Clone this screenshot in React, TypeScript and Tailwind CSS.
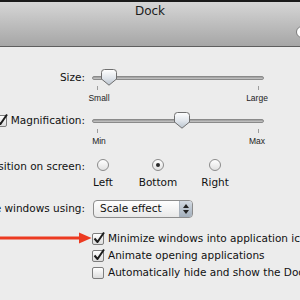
import React from "react";

const font = { fontFamily: '"DejaVu Sans", "Liberation Sans", Arial, sans-serif' };
const smallFont = { fontFamily: '"Liberation Sans", Arial, sans-serif' };

const Thumb = () => (
  <svg width="16" height="17" viewBox="0 0 16 17" className="block">
    <defs>
      <linearGradient id="thumbFill" x1="0" y1="0" x2="0" y2="1">
        <stop offset="0" stopColor="#ffffff" />
        <stop offset="0.55" stopColor="#dfe4ea" />
        <stop offset="1" stopColor="#b9c3ce" />
      </linearGradient>
    </defs>
    <path
      d="M3.5 0.5 H12.5 Q15.5 0.5 15.5 3.5 V10 L8 16.2 L0.5 10 V3.5 Q0.5 0.5 3.5 0.5 Z"
      fill="url(#thumbFill)"
      stroke="#6f6f6f"
      strokeWidth="1"
    />
  </svg>
);

const Slider = ({ pos, left, right }: { pos: number; left: string; right: string }) => (
  <div className="flex w-[172px] flex-col">
    <div className="relative flex h-[17px] items-center">
      <div className="h-[4px] w-full rounded-full border border-[#8a8a8a] bg-gradient-to-b from-[#9a9a9a] to-[#c9c9c9]" />
      <div className="absolute top-0" style={{ left: pos }}>
        <Thumb />
      </div>
    </div>
    <div className="flex justify-between px-[5px]">
      <div className="h-[4px] w-[1px] bg-[#9c9c9c]" />
      <div className="h-[4px] w-[1px] bg-[#9c9c9c]" />
    </div>
    <div className="mt-[2px] flex justify-between text-[8.5px] leading-[12px] text-[#222]" style={smallFont}>
      <span className="flex w-[14px] justify-center whitespace-nowrap">{left}</span>
      <span className="flex w-[14px] justify-center whitespace-nowrap">{right}</span>
    </div>
  </div>
);

const Check = ({ on }: { on?: boolean }) => (
  <div className="relative h-[12px] w-[12px] shrink-0 rounded-[2px] border border-[#7d7d7d] bg-gradient-to-b from-white to-[#dcdcdc]">
    {on && (
      <svg width="14" height="14" viewBox="0 0 14 14" className="absolute left-[-1px] top-[-3px]">
        <path d="M2.5 7.5 L5.5 11 L12 1.5" fill="none" stroke="#1d1d1d" strokeWidth="2" strokeLinejoin="round" />
      </svg>
    )}
  </div>
);

const Radio = ({ on }: { on?: boolean }) => (
  <div className="flex h-[12px] w-[12px] items-center justify-center rounded-full border border-[#8b8b8b] bg-gradient-to-b from-white to-[#e1e1e1]">
    {on && <div className="h-[4px] w-[4px] rounded-full bg-[#2a2a2a]" />}
  </div>
);

const Label = ({ children }: { children: React.ReactNode }) => (
  <div className="flex w-[88px] shrink-0 items-start justify-end overflow-hidden whitespace-nowrap pr-[3px] text-[10.5px] text-[#111]">
    {children}
  </div>
);

export default function App() {
  return (
    <div className="h-[300px] w-[300px] overflow-hidden bg-[#ececec]" style={font}>
      {/* title + toolbar */}
      <div className="border-t-[2px] border-b border-t-[#1a1a1a] border-b-[#5e5e5e] bg-gradient-to-b from-[#d6d6d6] to-[#a6a6a6]">
        <div className="pt-[2px] text-center text-[12px] leading-[14px] text-[#1b1b1b]">Dock</div>
        <div className="flex h-[28px] items-center justify-end">
          <div className="mr-[-120px] h-[12px] w-[124px] shrink-0 rounded-full border border-[#7a7a7a] bg-white" />
        </div>
      </div>

      {/* Size */}
      <div className="mt-[22px] flex">
        <Label>
          <span className="leading-[17px]">Size:</span>
        </Label>
        <div className="ml-[4px]">
          <Slider pos={9} left="Small" right="Large" />
        </div>
      </div>

      {/* Magnification */}
      <div className="mt-[8px] flex">
        <Label>
          <div className="flex h-[17px] items-center gap-[4px]">
            <Check on />
            <span>Magnification:</span>
          </div>
        </Label>
        <div className="ml-[4px]">
          <Slider pos={82} left="Min" right="Max" />
        </div>
      </div>

      {/* Position */}
      <div className="mt-[12px] flex">
        <Label>
          <span className="leading-[14px]">Position on screen:</span>
        </Label>
        <div className="ml-[2px] flex gap-[20px] text-[10.5px] text-[#111]">
          {[
            ["Left", false, "w-[26px]"],
            ["Bottom", true, "w-[44px]"],
            ["Right", false, "w-[30px]"],
          ].map(([t, on, w]) => (
            <div key={t as string} className={`flex flex-col items-center ${w as string}`}>
              <Radio on={on as boolean} />
              <span className="mt-[4px] leading-[14px] whitespace-nowrap">{t as string}</span>
            </div>
          ))}
        </div>
      </div>

      {/* Minimize using */}
      <div className="mt-[11px] flex items-center">
        <Label>
          <span>Minimize windows using:</span>
        </Label>
        <div className="ml-[5px] flex h-[18px] w-[100px] items-center overflow-hidden rounded-[4px] border border-[#8c8c8c] bg-gradient-to-b from-white to-[#e8e8e8]">
          <span className="flex-1 pl-[6px] text-[10.5px] text-[#111]">Scale effect</span>
          <div className="flex h-full w-[13px] flex-col items-center justify-center gap-[2px] border-l border-[#a9b2bc] bg-gradient-to-b from-[#d3dae2] to-[#a3afbc]">
            <svg width="6" height="4" viewBox="0 0 6 4"><path d="M0 4 L3 0 L6 4 Z" fill="#222" /></svg>
            <svg width="6" height="4" viewBox="0 0 6 4"><path d="M0 0 L3 4 L6 0 Z" fill="#222" /></svg>
          </div>
        </div>
      </div>

      {/* checkboxes */}
      <div className="mt-[14px] flex">
        <div className="flex w-[92px] shrink-0 items-start">
          <svg width="92" height="12" viewBox="0 0 92 12">
            <path d="M0 6 H81" stroke="#ec3a21" strokeWidth="3" />
            <path d="M79 0.5 L91.5 6 L79 11.5 Z" fill="#ec3a21" />
          </svg>
        </div>
        <div className="flex flex-col gap-[4px] text-[10.5px] text-[#111]">
          {[
            ["Minimize windows into application icon", true],
            ["Animate opening applications", true],
            ["Automatically hide and show the Dock", false],
          ].map(([t, on]) => (
            <div key={t as string} className="flex h-[13px] items-center gap-[4px] whitespace-nowrap">
              <Check on={on as boolean} />
              <span>{t as string}</span>
            </div>
          ))}
        </div>
      </div>
    </div>
  );
}
